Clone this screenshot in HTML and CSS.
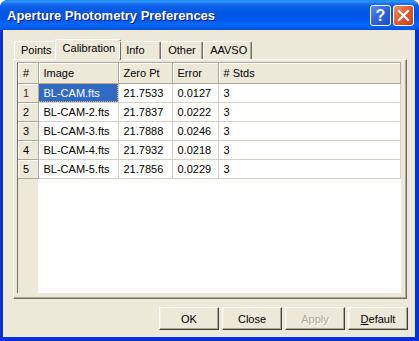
FILE: index.html
```html
<!DOCTYPE html>
<html lang="en">
<head>
    <meta charset="UTF-8" />
    <title>Aperture Photometry Preferences</title>
    <link rel="stylesheet" href="styles.css">
</head>
<body>
    <div class="window">
        <div class="titlebar">
            <span class="title">Aperture Photometry Preferences</span>
            <div class="caption-buttons">
                <div class="cap-btn help">?</div>
                <div class="cap-btn close">
                    <svg width="13" height="13" viewBox="0 0 13 13">
                        <path d="M2 2 L11 11 M11 2 L2 11" stroke="#fff" stroke-width="2.2" stroke-linecap="square" />
                    </svg>
                </div>
            </div>
        </div>

        <div class="client">
            <div class="tabs">
                <div class="tab">Points</div>
                <div class="tab active">Calibration</div>
                <div class="tab">Info</div>
                <div class="tab">Other</div>
                <div class="tab">AAVSO</div>
            </div>

            <div class="panel">
                <div class="grid">
                    <table>
                        <thead>
                            <tr>
                                <th class="col-num">#</th>
                                <th class="col-image">Image</th>
                                <th class="col-zero">Zero Pt</th>
                                <th class="col-error">Error</th>
                                <th># Stds</th>
                            </tr>
                        </thead>
                        <tbody>
                            <tr>
                                <th class="row-head current">1</th>
                                <td class="selected">BL-CAM.fts</td>
                                <td>21.7533</td>
                                <td>0.0127</td>
                                <td>3</td>
                            </tr>
                            <tr>
                                <th class="row-head">2</th>
                                <td>BL-CAM-2.fts</td>
                                <td>21.7837</td>
                                <td>0.0222</td>
                                <td>3</td>
                            </tr>
                            <tr>
                                <th class="row-head">3</th>
                                <td>BL-CAM-3.fts</td>
                                <td>21.7888</td>
                                <td>0.0246</td>
                                <td>3</td>
                            </tr>
                            <tr>
                                <th class="row-head">4</th>
                                <td>BL-CAM-4.fts</td>
                                <td>21.7932</td>
                                <td>0.0218</td>
                                <td>3</td>
                            </tr>
                            <tr>
                                <th class="row-head">5</th>
                                <td>BL-CAM-5.fts</td>
                                <td>21.7856</td>
                                <td>0.0229</td>
                                <td>3</td>
                            </tr>
                        </tbody>
                    </table>
                </div>
            </div>

            <div class="buttons">
                <button>OK</button>
                <button>Close</button>
                <button disabled>Apply</button>
                <button><u>D</u>efault</button>
            </div>
        </div>
    </div>
</body>
</html>
```

FILE: styles.css
```css
* {
    box-sizing: border-box;
}
body {
    margin: 0;
    background: #ffffff;
    font-family: "Liberation Sans", Arial, sans-serif;
    font-size: 11px;
}
.window {
    width: 419px;
    height: 341px;
    display: flex;
    flex-direction: column;
    background: #0831d9;
    border-radius: 8px 8px 0 0;
    overflow: hidden;
}
.titlebar {
    height: 30px;
    flex: none;
    display: flex;
    align-items: center;
    justify-content: space-between;
    padding: 0 5px 0 7px;
    background: linear-gradient(#0997ff 0%, #3a8cf8 6%, #1a72f0 12%, #0a5fe6 22%, #0055e5 45%, #0058ee 65%, #0566f8 80%, #0460f0 90%, #0050dd 100%);
}
.title {
    color: #ffffff;
    font-weight: bold;
    font-size: 13px;
    text-shadow: 1px 1px #0a1883;
    margin-top: 1px;
}
.caption-buttons {
    display: flex;
    gap: 2px;
    margin-top: 1px;
}
.cap-btn {
    width: 21px;
    height: 21px;
    border: 1px solid #ffffff;
    border-radius: 3px;
    display: flex;
    align-items: center;
    justify-content: center;
    color: #ffffff;
}
.help {
    background: linear-gradient(135deg, #5a8ef5, #2d63de 50%, #1c4fc8);
    font-weight: bold;
    font-size: 16px;
}
.close {
    background: linear-gradient(135deg, #f09070, #e05a2c 50%, #c9401a);
}
.client {
    flex: 1;
    display: flex;
    flex-direction: column;
    margin: 0 4px 4px 3px;
    padding: 9px 8px 0 10px;
    background: #ece9d8;
}
.tabs {
    display: flex;
    align-items: flex-end;
    height: 20px;
    padding-left: 1px;
    position: relative;
    z-index: 1;
}
.tab {
    min-width: 42px;
    height: 18px;
    padding: 2px 4px 0 6px;
    border-top: 1px solid #ffffff;
    border-left: 1px solid #ffffff;
    border-right: 1px solid #716f64;
    border-radius: 2px 2px 0 0;
    box-shadow: inset -1px 0 #aca899;
    color: #000000;
}
.tab.active {
    height: 21px;
    margin: 0 -2px -1px;
    padding: 2px 5px 0 7px;
    background: #ece9d8;
}
.panel {
    height: 240px;
    display: flex;
    padding: 2px 5px 5px 3px;
    border-top: 1px solid #ffffff;
    border-left: 1px solid #ffffff;
    border-right: 1px solid #716f64;
    border-bottom: 1px solid #716f64;
    box-shadow: inset -1px -1px #aca899;
}
.grid {
    flex: 1;
    border-top: 1px solid #aca899;
    border-left: 1px solid #716f64;
    background: linear-gradient(to right, #ece9d8 20px, #ffffff 20px);
}
table {
    width: 100%;
    border-collapse: collapse;
    table-layout: fixed;
}
th, td {
    padding: 0 0 0 5px;
    text-align: left;
    font-weight: normal;
    white-space: nowrap;
}
thead th {
    height: 20px;
    background: #ece9d8;
    border-right: 1px solid #aca899;
    border-bottom: 1px solid #aca899;
    box-shadow: inset 1px 1px #ffffff;
}
.col-num {
    width: 20px;
}
.col-image {
    width: 80px;
}
.col-zero {
    width: 54px;
}
.col-error {
    width: 46px;
}
tbody td {
    height: 19px;
    border-right: 1px solid #d4d0c8;
    border-bottom: 1px solid #d4d0c8;
}
.row-head {
    height: 19px;
    background: #ece9d8;
    border-right: 1px solid #aca899;
    border-bottom: 1px solid #aca899;
    box-shadow: inset 1px 1px #ffffff;
}
.row-head.current {
    color: #6b1030;
}
td.selected {
    background: #316ac5;
    color: #ffffff;
    outline: 1px dotted #d8b060;
    outline-offset: -1px;
}
.buttons {
    display: flex;
    justify-content: flex-end;
    gap: 3px;
    margin: 8px -1px 0 0;
}
button {
    width: 60px;
    height: 23px;
    padding: 0;
    font-family: "Liberation Sans", Arial, sans-serif;
    font-size: 11px;
    font-weight: normal;
    color: #000000;
    background: #ece9d8;
    border: 1px solid;
    border-color: #ffffff #404040 #404040 #ffffff;
    box-shadow: inset -1px -1px #aca899, inset 1px 1px #f1efe2;
}
button:disabled {
    color: #aca899;
    text-shadow: 1px 1px #ffffff;
}
```
